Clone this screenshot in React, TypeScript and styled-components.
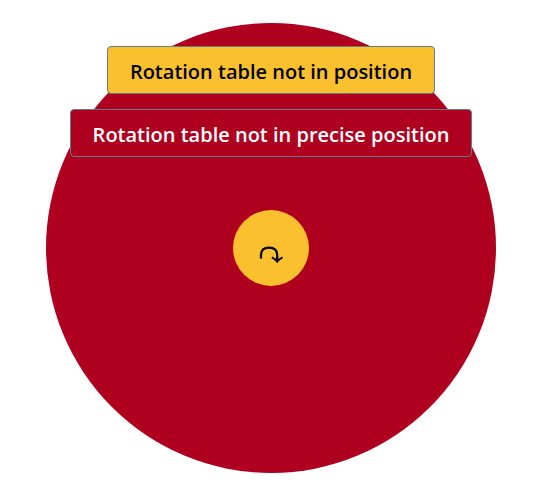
import React from "react";
import styled, { createGlobalStyle } from "styled-components";

const GlobalStyle = createGlobalStyle`
  *, *::before, *::after { box-sizing: border-box; }
  body {
    margin: 0;
    background: #ffffff;
    font-family: "Open Sans", "Noto Sans", sans-serif;
  }
`;

const Page = styled.main`
  display: flex;
  justify-content: center;
  padding: 23px 5px 19px 0;
`;

const Table = styled.section`
  width: 450px;
  height: 450px;
  padding-top: 23px;
  border-radius: 50%;
  background: #b00020;
  display: flex;
  flex-direction: column;
  align-items: center;
`;

const Messages = styled.div`
  display: flex;
  flex-direction: column;
  align-items: center;
  gap: 15px;
  margin-bottom: 53px;
`;

const Message = styled.div<{ $level: "warning" | "error" }>`
  padding: 11px 22px 7px;
  border: 1px solid #607d8b;
  border-radius: 4px;
  background: ${(p) => (p.$level === "warning" ? "#fbc02d" : "#b00020")};
  color: ${(p) => (p.$level === "warning" ? "#000000" : "#ffffff")};
  font-size: 20px;
  font-weight: 600;
  line-height: 28px;
  white-space: nowrap;
`;

const RotateButton = styled.button`
  width: 76px;
  height: 76px;
  padding: 14px 0 0;
  border: 0;
  border-radius: 50%;
  background: #fbc02d;
  color: #000000;
  display: flex;
  align-items: center;
  justify-content: center;
  cursor: pointer;
`;

export default function App() {
  return (
    <>
      <GlobalStyle />
      <Page>
        <Table>
          <Messages>
            <Message $level="warning">Rotation table not in position</Message>
            <Message $level="error">Rotation table not in precise position</Message>
          </Messages>
          <RotateButton type="button" aria-label="Rotate">
            <svg width="24" height="18" viewBox="0 0 24 18" aria-hidden="true">
              <path
                d="M2 12.5V9C2 4 5 1.6 10 1.6S18.2 4 18.2 9V15.5"
                fill="none"
                stroke="currentColor"
                strokeWidth="2.3"
              />
              <path d="M12.8 11.4Q16.2 12.8 18.2 15.8 20.2 12.8 23.6 11.4" fill="none" stroke="currentColor" strokeWidth="1.7" />
            </svg>
          </RotateButton>
        </Table>
      </Page>
    </>
  );
}
